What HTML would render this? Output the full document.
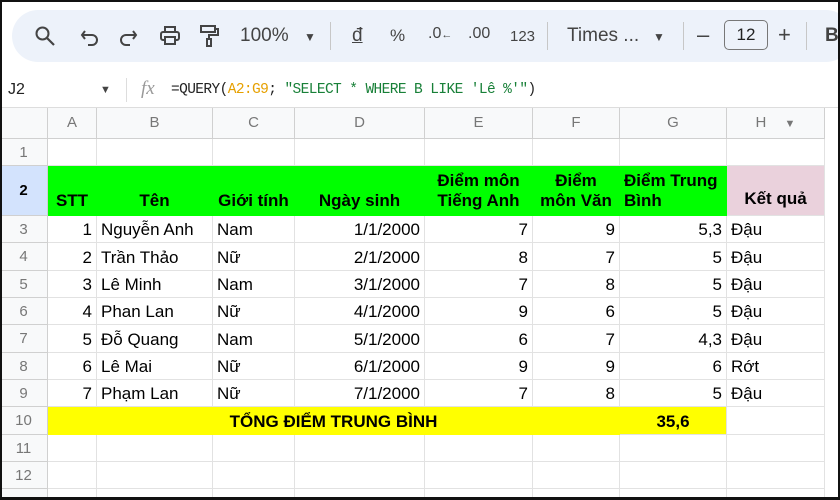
<!DOCTYPE html>
<html><head><meta charset="utf-8"><style>
*{margin:0;padding:0;box-sizing:border-box}
html,body{width:840px;height:500px;overflow:hidden}
body{background:#fff;font-family:"Liberation Sans",Arial,sans-serif;position:relative}
.frame{position:absolute;left:0;top:0;width:840px;height:500px;border:2px solid #111;border-bottom-width:3px;pointer-events:none;z-index:10}
.tb{position:absolute;left:12px;top:10px;width:840px;height:52px;background:#edf2fa;border-radius:26px}
.t{position:absolute;top:25px;font-size:19px;color:#444}
.fx{position:absolute;top:72px;left:0;width:840px;height:36px;border-bottom:1px solid #ddd}
.grid{position:absolute;left:0;top:108px;width:840px;height:392px;overflow:hidden}
.cell{position:absolute;border-right:1px solid #e2e2e2;border-bottom:1px solid #e2e2e2;font-size:17px;color:#000;white-space:nowrap;overflow:hidden}
.hd{background:#f8f9fa;color:#777;font-size:15px;text-align:center;border-color:#d0d0d0}
</style></head><body>
<div class="tb"></div>
<svg style="position:absolute;left:34px;top:25px" width="22" height="22" viewBox="0 0 22 22"><circle cx="8.5" cy="8.5" r="6" fill="none" stroke="#444" stroke-width="2"/><path d="M13 13l7 7" stroke="#444" stroke-width="2.2"/></svg>
<svg style="position:absolute;left:80px;top:27px" width="20" height="20" viewBox="0 0 20 20"><path d="M5 4L2 8l3 4M2 8h10a5 5 0 010 10H8" fill="none" stroke="#444" stroke-width="2"/></svg>
<svg style="position:absolute;left:118px;top:27px" width="20" height="20" viewBox="0 0 20 20"><path d="M15 4l3 4-3 4M18 8H8a5 5 0 000 10h4" fill="none" stroke="#444" stroke-width="2"/></svg>
<svg style="position:absolute;left:159px;top:25px" width="22" height="22" viewBox="0 0 22 22"><rect x="6" y="2" width="10" height="5" fill="none" stroke="#444" stroke-width="2"/><rect x="2" y="7" width="18" height="8" rx="2" fill="none" stroke="#444" stroke-width="2"/><rect x="6" y="12" width="10" height="7" fill="#edf2fa" stroke="#444" stroke-width="2"/></svg>
<svg style="position:absolute;left:198px;top:24px" width="22" height="24" viewBox="0 0 22 24"><rect x="3" y="2" width="14" height="6" fill="none" stroke="#444" stroke-width="2"/><path d="M17 5h3v6h-9v4" fill="none" stroke="#444" stroke-width="2"/><rect x="9" y="15" width="4" height="7" fill="none" stroke="#444" stroke-width="2"/></svg>
<div class="t" style="left:240px">100%</div>
<div class="t" style="left:304px;font-size:12px;top:30px">▼</div>
<div style="position:absolute;left:330px;top:22px;width:1px;height:28px;background:#c7c7c7"></div>
<div class="t" style="left:352px;text-decoration:underline">đ</div>
<div class="t" style="left:390px;font-size:17px;top:26px">%</div>
<div class="t" style="left:428px;font-size:16px;top:25px">.0<span style="font-size:11px">←</span></div>
<div class="t" style="left:468px;font-size:16px;top:25px">.00</div>
<div class="t" style="left:510px;font-size:15px;top:28px">123</div>
<div style="position:absolute;left:547px;top:22px;width:1px;height:28px;background:#c7c7c7"></div>
<div class="t" style="left:567px">Times ...</div>
<div class="t" style="left:653px;font-size:12px;top:30px">▼</div>
<div style="position:absolute;left:683px;top:22px;width:1px;height:28px;background:#c7c7c7"></div>
<div class="t" style="left:697px;font-size:22px;top:22px">–</div>
<div style="position:absolute;left:724px;top:20px;width:44px;height:30px;border:1px solid #777;border-radius:5px;font-size:17px;text-align:center;line-height:28px;color:#222">12</div>
<div class="t" style="left:778px;font-size:22px;top:22px">+</div>
<div style="position:absolute;left:806px;top:22px;width:1px;height:28px;background:#c7c7c7"></div>
<div class="t" style="left:825px;font-weight:bold">B</div>
<div class="fx">
<div style="position:absolute;left:8px;top:9px;font-size:16px;color:#222">J2</div>
<div style="position:absolute;left:100px;top:12px;font-size:11px;color:#444">▼</div>
<div style="position:absolute;left:126px;top:6px;width:1px;height:24px;background:#ddd"></div>
<div style="position:absolute;left:141px;top:6px;font-size:19px;font-style:italic;font-family:'Liberation Serif',serif;color:#999">fx</div>
<div style="position:absolute;left:171px;top:10px;font-size:14.5px;font-family:'Liberation Mono',monospace;color:#222;letter-spacing:-0.6px">=QUERY(<span style="color:#e6a000">A2:G9</span>; <span style="color:#188038">"SELECT * WHERE B LIKE 'Lê %'"</span>)</div>
</div>
<div class="grid" id="g"></div>
<div class="frame"></div>
<script>
var cx=[0,48,97,213,295,425,533,620,727,825],
ry=[108,139,166,216,243,271,298,325,353,380,407,435,462,489,520];
var g=document.getElementById('g'),h='';
function c(x0,x1,y0,y1,txt,st,cls){h+='<div class="cell '+(cls||'')+'" style="left:'+cx[x0]+'px;top:'+(ry[y0]-108)+'px;width:'+(cx[x1]-cx[x0])+'px;height:'+(ry[y1]-ry[y0])+'px;'+(st||'')+'">'+txt+'</div>';}
c(0,1,0,1,'','','hd');
var L='ABCDEFGH';
for(var i=0;i<8;i++)c(i+1,i+2,0,1,L[i]+(i==7?' <span style="font-size:11px;margin-left:14px">▼</span>':''),'line-height:30px;','hd');
for(var r=1;r<14;r++)c(0,1,r,r+1,r,'line-height:'+(ry[r+1]-ry[r])+'px;'+(r==2?'background:#d3e3fd;color:#000;font-weight:bold;':''),'hd');
for(i=1;i<9;i++)c(i,i+1,1,2,'');
var hdr=['STT','Tên','Giới tính','Ngày sinh','Điểm môn<br>Tiếng Anh','Điểm<br>môn Văn','Điểm Trung<br>Bình'];
for(i=0;i<7;i++)c(i+1,i+2,2,3,'<div style="position:absolute;bottom:4px;left:0;right:0;text-align:'+(i==6?'left;padding-left:4px':'center')+';line-height:20px">'+hdr[i]+'</div>','background:#00ff00;font-weight:bold;border-color:#00ff00;');
c(8,9,2,3,'<div style="position:absolute;bottom:6px;left:0;right:0;text-align:center">Kết quả</div>','background:#ead1dc;font-weight:bold;');
var d=[['Nguyễn Anh','Nam','7','9','5,3','Đậu'],['Trần Thảo','Nữ','8','7','5','Đậu'],['Lê Minh','Nam','7','8','5','Đậu'],['Phan Lan','Nữ','9','6','5','Đậu'],['Đỗ Quang','Nam','6','7','4,3','Đậu'],['Lê Mai','Nữ','9','9','6','Rớt'],['Phạm Lan','Nữ','7','8','5','Đậu']];
for(r=0;r<7;r++){var R=r+3,lh='line-height:'+(ry[R+1]-ry[R]+1)+'px;',rt=lh+'text-align:right;padding-right:4px;',lt=lh+'padding-left:4px;';
c(1,2,R,R+1,r+1,rt);c(2,3,R,R+1,d[r][0],lt);c(3,4,R,R+1,d[r][1],lt);c(4,5,R,R+1,(r+1)+'/1/2000',rt);
c(5,6,R,R+1,d[r][2],rt);c(6,7,R,R+1,d[r][3],rt);c(7,8,R,R+1,d[r][4],rt);c(8,9,R,R+1,d[r][5],lt);}
c(1,7,10,11,'TỔNG ĐIỂM TRUNG BÌNH','background:#ffff00;font-weight:bold;text-align:center;line-height:29px;border-color:#ffff00;');
c(7,8,10,11,'35,6','background:#ffff00;font-weight:bold;text-align:center;line-height:29px;');
c(8,9,10,11,'');
for(r=11;r<14;r++)for(i=1;i<9;i++)c(i,i+1,r,r+1,'');
g.innerHTML=h;
</script>
</body></html>
